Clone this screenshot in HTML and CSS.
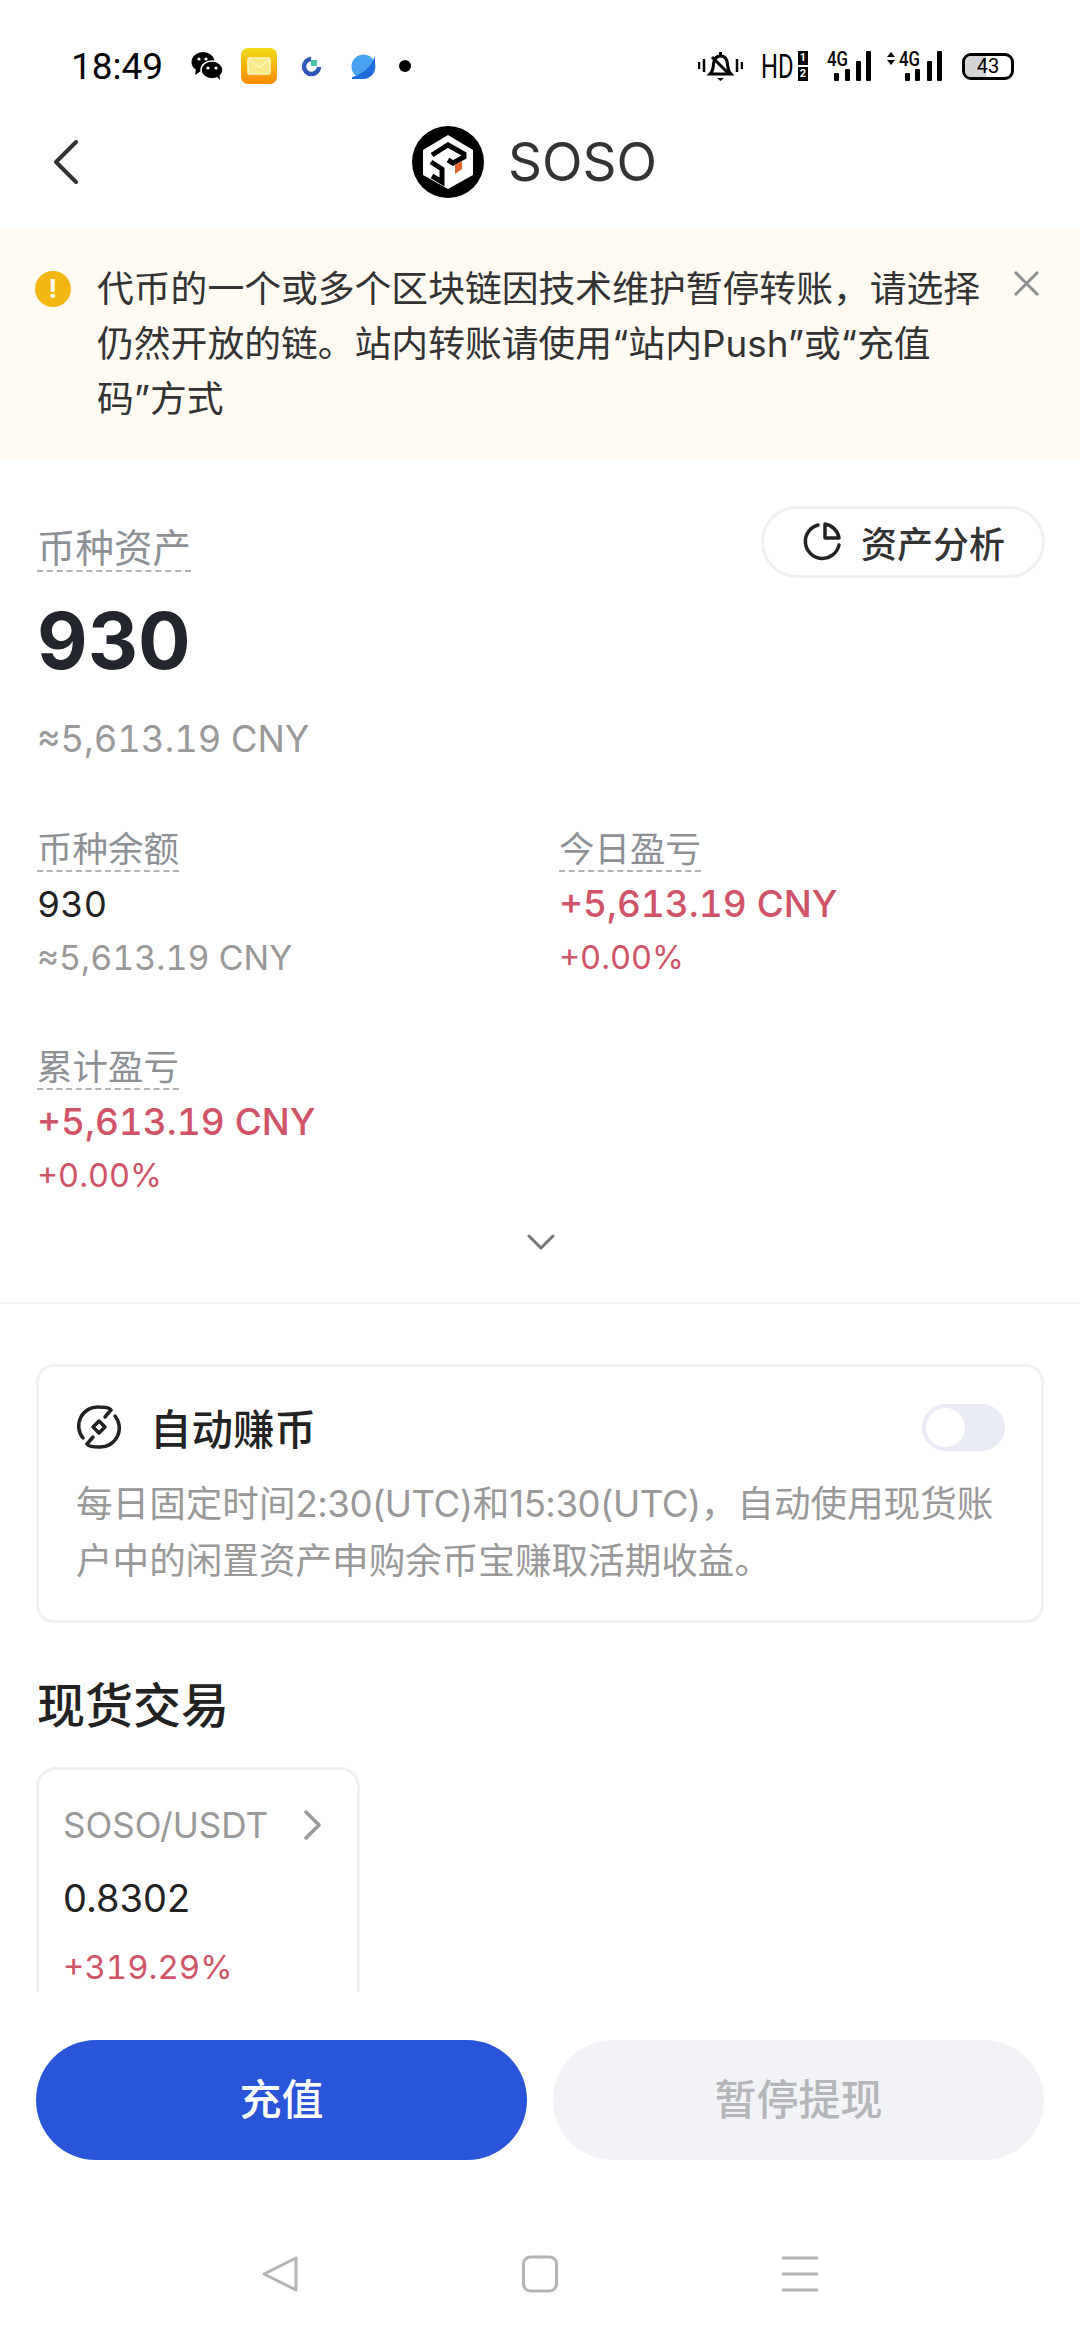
FILE: index.html
```html
<!DOCTYPE html>
<html lang="zh-CN">
<head>
    <meta charset="UTF-8">
    <meta name="viewport" content="width=device-width, initial-scale=1.0">
    <title>SOSO</title>
    <link rel="stylesheet" href="styles.css">
</head>
<body>
    <div class="app">
        <!-- Barra de status -->
        <div class="status-bar">
            <span class="status-time">18:49</span>
            <svg class="ic-wechat" width="32" height="28" viewBox="0 0 32 28">
                <ellipse cx="12" cy="10" rx="11.5" ry="10"/>
                <path d="M5 17l-1 6 6-4z"/>
                <ellipse cx="21" cy="18" rx="11" ry="9" stroke="#fff" stroke-width="1.5"/>
                <path d="M26 25l3 3-.5-5z"/>
                <circle cx="8" cy="7" r="1.6" fill="#fff"/><circle cx="15" cy="7" r="1.6" fill="#fff"/>
                <circle cx="17" cy="16" r="1.6" fill="#fff"/><circle cx="25" cy="16" r="1.6" fill="#fff"/>
            </svg>
            <svg class="ic-mail" width="36" height="36" viewBox="0 0 36 36">
                <defs>
                    <linearGradient id="mailBg" x1="0" y1="0" x2="0" y2="1">
                        <stop offset="0" stop-color="#f0dc18"/>
                        <stop offset="1" stop-color="#fb8a06"/>
                    </linearGradient>
                </defs>
                <rect width="36" height="36" rx="7" fill="url(#mailBg)"/>
                <rect x="7" y="10" width="22" height="16" rx="1.5" fill="#f8e888" stroke="#fff6c0" stroke-width="1.5"/>
                <path d="M7 11l11 8 11-8" fill="none" stroke="#fff6c0" stroke-width="1.5"/>
            </svg>
            <svg class="ic-ring" width="21" height="21" viewBox="0 0 21 21">
                <path d="M10 3a7.5 7.5 0 1 0 8 8" fill="none" stroke="#2f57b8" stroke-width="4.5"/>
                <rect x="10" y="4" width="6" height="6" fill="#4cc5a8"/>
            </svg>
            <svg class="ic-planet" width="25" height="25" viewBox="0 0 25 25">
                <circle cx="12.5" cy="12.5" r="12" fill="#4aa2f5"/>
                <path d="M1 23 C10 21 20 14 24 2 L24 14 C24 20 18 25 12 25 L1 25z" fill="#1f6ddb"/>
            </svg>
            <span class="status-dot"></span>
            <svg class="ic-bell" width="45" height="30" viewBox="0 0 45 30">
                <path d="M1 11v7M6 8v13M39 8v13M44 11v7" stroke="#000" stroke-width="2.5" fill="none"/>
                <path d="M22.5 1v3M12 23h21c-3-3-3-5-3.500-10-.5-5-3-8-7-8s-6.500 3-7 8c-.5 5-.5 7-3.500 10z" fill="none" stroke="#000" stroke-width="3"/>
                <path d="M14 6l17 17" stroke="#000" stroke-width="3"/>
                <path d="M19 27h7l-3.500 3z"/>
            </svg>
            <span class="status-hd"><span class="hd-text">HD</span></span>
            <span class="sim-badges"><span>1</span><span>2</span></span>
            <svg class="ic-signal" width="44" height="42" viewBox="0 -6 44 42">
                <text class="signal-text" transform="scale(.8 1)" x="0" y="15">4G</text>
                <rect x="7" y="22" width="5" height="8" rx="1"/>
                <rect x="18" y="18" width="5" height="12" rx="1"/>
                <rect x="29" y="10" width="5" height="20" rx="1"/>
                <rect x="39" y="0" width="5" height="30" rx="1"/>
            </svg>
            <svg class="ic-signal-two" width="55" height="42" viewBox="0 -6 55 42">
                <path d="M0 6l4-5 4 5zM0 9l4 5 4-5z"/>
                <text class="signal-text" transform="scale(.8 1)" x="15" y="15">4G</text>
                <rect x="18" y="22" width="5" height="8" rx="1"/>
                <rect x="28" y="18" width="5" height="12" rx="1"/>
                <rect x="40" y="10" width="5" height="20" rx="1"/>
                <rect x="50" y="0" width="5" height="30" rx="1"/>
            </svg>
            <span class="battery"><span class="battery-level"></span><span class="battery-num">43</span></span>
        </div>

        <!-- Cabeçalho -->
        <div class="nav">
            <svg class="nav-back" width="26" height="44" viewBox="0 0 26 44">
                <path d="M23 2L3 22l20 20" fill="none" stroke="#333" stroke-width="4" stroke-linecap="round" stroke-linejoin="round"/>
            </svg>
            <svg class="nav-logo" width="72" height="72" viewBox="0 0 72 72">
                <circle cx="36" cy="36" r="36" fill="#000"/>
                <path d="M36 9l25 15v25L36 63 11 49V24z" fill="#fff"/>
                <path d="M20 29l16-10 16 9v3l-11 6-5-3M19 36l11 7v13l-10-6" fill="none" stroke="#000" stroke-width="5"/>
                <path d="M43 39l7-4v8l-7 5z" fill="#e5622e"/>
            </svg>
            <span class="nav-title">SOSO</span>
        </div>

        <div class="main">
            <!-- Aviso -->
            <div class="notice">
                <span class="notice-icon">!</span>
                <p class="notice-text">代币的一个或多个区块链因技术维护暂停转账，请选择<br>仍然开放的链。站内转账请使用“站内Push”或“充值<br>码”方式</p>
                <svg class="notice-close" width="27" height="27" viewBox="0 0 27 27">
                    <path d="M2 2l23 23M25 2L2 25" stroke="#8b8f92" stroke-width="3" fill="none"/>
                </svg>
            </div>

            <!-- Ativos -->
            <div class="assets">
                <div class="assets-head">
                    <span class="label label-big">币种资产</span>
                    <div class="pill">
                        <svg width="40" height="40" viewBox="0 0 40 40">
                            <path d="M16 3a17 17 0 1 0 21 20" fill="none" stroke="#222" stroke-width="3.500" stroke-linecap="round"/>
                            <path d="M23 2c7 1 13 7 14 14h-14z" fill="none" stroke="#222" stroke-width="3.500" stroke-linejoin="round"/>
                        </svg>
                        <span>资产分析</span>
                    </div>
                </div>
                <div class="assets-total">930</div>
                <div class="assets-cny">≈5,613.19 CNY</div>

                <div class="metrics">
                    <div class="metric">
                        <span class="label">币种余额</span>
                        <span class="metric-value">930</span>
                        <span class="metric-sub">≈5,613.19 CNY</span>
                    </div>
                    <div class="metric">
                        <span class="label">今日盈亏</span>
                        <span class="metric-value up">+5,613.19 CNY</span>
                        <span class="metric-sub up">+0.00%</span>
                    </div>
                    <div class="metric">
                        <span class="label">累计盈亏</span>
                        <span class="metric-value up">+5,613.19 CNY</span>
                        <span class="metric-sub up">+0.00%</span>
                    </div>
                </div>

                <svg class="expand" width="28" height="16" viewBox="0 0 28 16">
                    <path d="M2 2l12 12L26 2" fill="none" stroke="#777" stroke-width="3" stroke-linecap="round" stroke-linejoin="round"/>
                </svg>
            </div>
            <div class="divider"></div>

            <!-- Auto earn -->
            <div class="earn-card">
                <div class="earn-head">
                    <svg width="46" height="46" viewBox="10 9 46 46">
                        <path d="M17 43A19 19 0 0 1 33 12c5 0 11 1 12 3l-6 7M49 21A19 19 0 0 1 33 52c-5 0-11-1-12-3l6-7" fill="none" stroke="#222" stroke-width="3.500" stroke-linecap="round"/>
                        <path d="M33 26l6 6-6 6-6-6z" fill="none" stroke="#222" stroke-width="3.500" stroke-linejoin="round"/>
                    </svg>
                    <span class="earn-title">自动赚币</span>
                    <span class="toggle"><span class="toggle-knob"></span></span>
                </div>
                <p class="earn-desc">每日固定时间<span class="desc-latin">2:30(UTC)</span>和<span class="desc-latin">15:30(UTC)</span>，自动使用现货账<br>户中的闲置资产申购余币宝赚取活期收益。</p>
            </div>

            <!-- Spot -->
            <h3 class="section-title">现货交易</h3>
            <div class="trade-card">
                <div class="trade-head">
                    <span>SOSO/USDT</span>
                    <svg width="18" height="30" viewBox="0 0 18 30">
                        <path d="M2 2l13 13L2 28" fill="none" stroke="#999" stroke-width="3.500" stroke-linecap="round" stroke-linejoin="round"/>
                    </svg>
                </div>
                <div class="trade-price">0.8302</div>
                <div class="trade-change">+319.29%</div>
            </div>
        </div>

        <!-- Botões -->
        <div class="actions">
            <button class="btn btn-primary">充值</button>
            <button class="btn btn-disabled">暂停提现</button>
        </div>

        <!-- Navegação do sistema -->
        <div class="sys-nav">
            <svg width="36" height="38" viewBox="0 0 36 38">
                <path d="M34 3v32L2 19z" fill="none" stroke="#b5b5b5" stroke-width="3" stroke-linejoin="round"/>
            </svg>
            <svg width="36" height="38" viewBox="0 0 36 38">
                <rect x="1.500" y="2" width="33" height="34" rx="7" fill="none" stroke="#b5b5b5" stroke-width="3"/>
            </svg>
            <svg width="36" height="38" viewBox="0 0 36 38">
                <path d="M0 3h36M0 19h36M0 35h36" stroke="#b5b5b5" stroke-width="3"/>
            </svg>
        </div>
    </div>
</body>
</html>
```

FILE: styles.css
```css
/* Corpo da página */
body {
    margin: 0;
    background-color: #fff;
    color: #222;
    font-family: Inter, "Noto Sans CJK SC", sans-serif;
}

p, h3 {
    margin: 0;
}

.app {
    width: 1080px;
    height: 2340px;
    overflow: hidden;
}

/* Barra de status */
.status-bar {
    height: 76px;
    padding: 28px 0 0 71px;
    display: flex;
    align-items: center;
    color: #000;
    font-family: Roboto, sans-serif;
}

.status-time {
    font-size: 37px;
    width: 120px;
    flex-shrink: 0;
}

.ic-mail { margin-left: 18px; }
.ic-ring { margin-left: 24px; }
.ic-planet { margin-left: 29px; }

.status-dot {
    width: 12px;
    height: 12px;
    margin-left: 23px;
    border-radius: 50%;
    background-color: #000;
}

.ic-bell { margin-left: 287px; }

.status-hd {
    width: 32px;
    margin-left: 18px;
    font-size: 34px;
    line-height: 30px;
}

.hd-text {
    display: inline-block;
    transform: scaleX(0.7);
    transform-origin: left center;
}

.sim-badges {
    display: flex;
    flex-direction: column;
    gap: 2px;
    width: 10px;
    margin-left: 5px;
}

.sim-badges span {
    height: 14px;
    background-color: #000;
    color: #fff;
    font-size: 11px;
    font-weight: 700;
    line-height: 14px;
    text-align: center;
}

.ic-signal { margin-left: 19px; }
.ic-signal-two { margin-left: 16px; }

.signal-text {
    font-family: Roboto, sans-serif;
    font-size: 21px;
    font-weight: 500;
}

.battery {
    position: relative;
    width: 46px;
    height: 21px;
    margin-left: 20px;
    border: 3px solid #000;
    border-radius: 9px;
    overflow: hidden;
    text-align: center;
}

.battery-level {
    position: absolute;
    left: 0;
    top: 0;
    bottom: 0;
    width: 45%;
    background-color: #d4d4d4;
}

.battery-num {
    position: relative;
    display: block;
    font-size: 20px;
    line-height: 21px;
}

/* Cabeçalho */
.nav {
    height: 124px;
    padding: 0 0 8px 53px;
    display: flex;
    align-items: center;
    box-sizing: border-box;
}

.nav-logo { margin-left: 333px; }

.nav-title {
    margin-left: 24px;
    font-size: 53px;
    color: #333;
}

.main {
    height: 1764px;
    overflow: hidden;
}

/* Aviso */
.notice {
    height: 232px;
    box-sizing: border-box;
    padding: 33px 40px 0 35px;
    display: flex;
    align-items: flex-start;
    background-color: #fffbf3;
}

.notice-icon {
    width: 36px;
    height: 36px;
    margin-top: 10px;
    flex-shrink: 0;
    border-radius: 50%;
    background-color: #f2b711;
    color: #fff;
    font-size: 26px;
    font-weight: 700;
    line-height: 36px;
    text-align: center;
}

.notice-text {
    flex: 1;
    margin-left: 26px;
    font-size: 36.8px;
    line-height: 55px;
    color: #333;
    white-space: nowrap;
}

.notice-close {
    margin-top: 9px;
}

/* Ativos */
.assets {
    padding: 46px 35px 0 37px;
}

.assets-head {
    display: flex;
    justify-content: space-between;
    align-items: flex-start;
}

.label {
    display: inline-block;
    font-size: 35.5px;
    line-height: 40px;
    color: #8d9196;
    border-bottom: 2px dashed #b0b2b6;
}

.label-big {
    font-size: 38.5px;
    line-height: 44px;
    margin-top: 20px;
}

.pill {
    width: 284px;
    height: 72px;
    box-sizing: border-box;
    padding-left: 38px;
    display: flex;
    align-items: center;
    gap: 19px;
    border: 3px solid #f0f0f2;
    border-radius: 36px;
    font-size: 36px;
    font-weight: 500;
    color: #333;
}

.assets-total {
    margin-top: 18px;
    font-size: 78px;
    font-weight: 700;
    line-height: 90px;
    color: #22252b;
}

.assets-cny {
    margin-top: 26px;
    font-size: 36.3px;
    line-height: 54px;
    color: #999;
    font-variant-numeric: tabular-nums;
}

.metrics {
    margin-top: 64px;
    display: grid;
    grid-template-columns: 522px 1fr;
    row-gap: 63px;
}

.metric {
    display: flex;
    flex-direction: column;
    align-items: flex-start;
}

.metric .label {
    margin-bottom: 5px;
}

.metric-value {
    font-size: 36px;
    line-height: 54px;
    color: #222;
    font-variant-numeric: tabular-nums;
}

.metric-sub {
    font-size: 34px;
    line-height: 54px;
    color: #999;
    font-variant-numeric: tabular-nums;
}

.metric-value.up {
    font-size: 37px;
    font-weight: 500;
}

.metric-sub.up {
    font-size: 32.5px;
}

.up {
    color: #cf5468 !important;
}

.expand {
    display: block;
    margin: 31px auto 0;
}

.divider {
    height: 2px;
    margin-top: 52px;
    background-color: #f2f2f4;
}

/* Cartão de ganho automático */
.earn-card {
    box-sizing: border-box;
    width: 1008px;
    height: 259px;
    margin: 60px 0 0 36px;
    padding: 36px 36px 0 37px;
    border: 3px solid #f2f2f4;
    border-radius: 18px;
}

.earn-head {
    display: flex;
    align-items: center;
    height: 48px;
}

.earn-title {
    margin-left: 28px;
    flex: 1;
    font-size: 41.5px;
    font-weight: 500;
    color: #222;
}

.toggle {
    width: 83px;
    height: 47px;
    border-radius: 24px;
    background-color: #e9ebf5;
    padding: 4px;
    box-sizing: border-box;
}

.toggle-knob {
    display: block;
    width: 39px;
    height: 39px;
    border-radius: 50%;
    background-color: #fff;
}

.earn-desc {
    margin-top: 25px;
    font-size: 36.6px;
    line-height: 57px;
    color: #999;
    white-space: nowrap;
}

.desc-latin {
    letter-spacing: -0.5px;
}

/* Negociação à vista */
.section-title {
    margin: 53px 0 0 37px;
    font-size: 48px;
    font-weight: 500;
    line-height: 60px;
    color: #222;
}

.trade-card {
    box-sizing: border-box;
    width: 324px;
    height: 300px;
    margin: 31px 0 0 36px;
    padding: 30px 35px 0 24px;
    border: 3px solid #f0f0f2;
    border-radius: 20px;
}

.trade-head {
    display: flex;
    justify-content: space-between;
    align-items: center;
    height: 50px;
    font-size: 35px;
    color: #999;
}

.trade-price {
    margin-top: 23px;
    font-size: 38px;
    line-height: 50px;
}

.trade-change {
    margin-top: 19px;
    font-size: 33px;
    line-height: 50px;
    color: #cf5468;
    font-variant-numeric: tabular-nums;
}

/* Botões */
.actions {
    margin-top: 48px;
    padding: 0 36px;
    display: flex;
    gap: 26px;
}

.btn {
    flex: 1;
    height: 120px;
    padding-bottom: 8px;
    border: none;
    border-radius: 60px;
    font-family: Inter, "Noto Sans CJK SC", sans-serif;
    font-size: 42px;
    font-weight: 500;
}

.btn-primary {
    background-color: #2a55d9;
    color: #fff;
}

.btn-disabled {
    background-color: #f1f3f6;
    color: #b5b6ba;
}

/* Navegação do sistema */
.sys-nav {
    margin-top: 95px;
    padding-left: 262px;
    display: flex;
    gap: 224px;
}
```
